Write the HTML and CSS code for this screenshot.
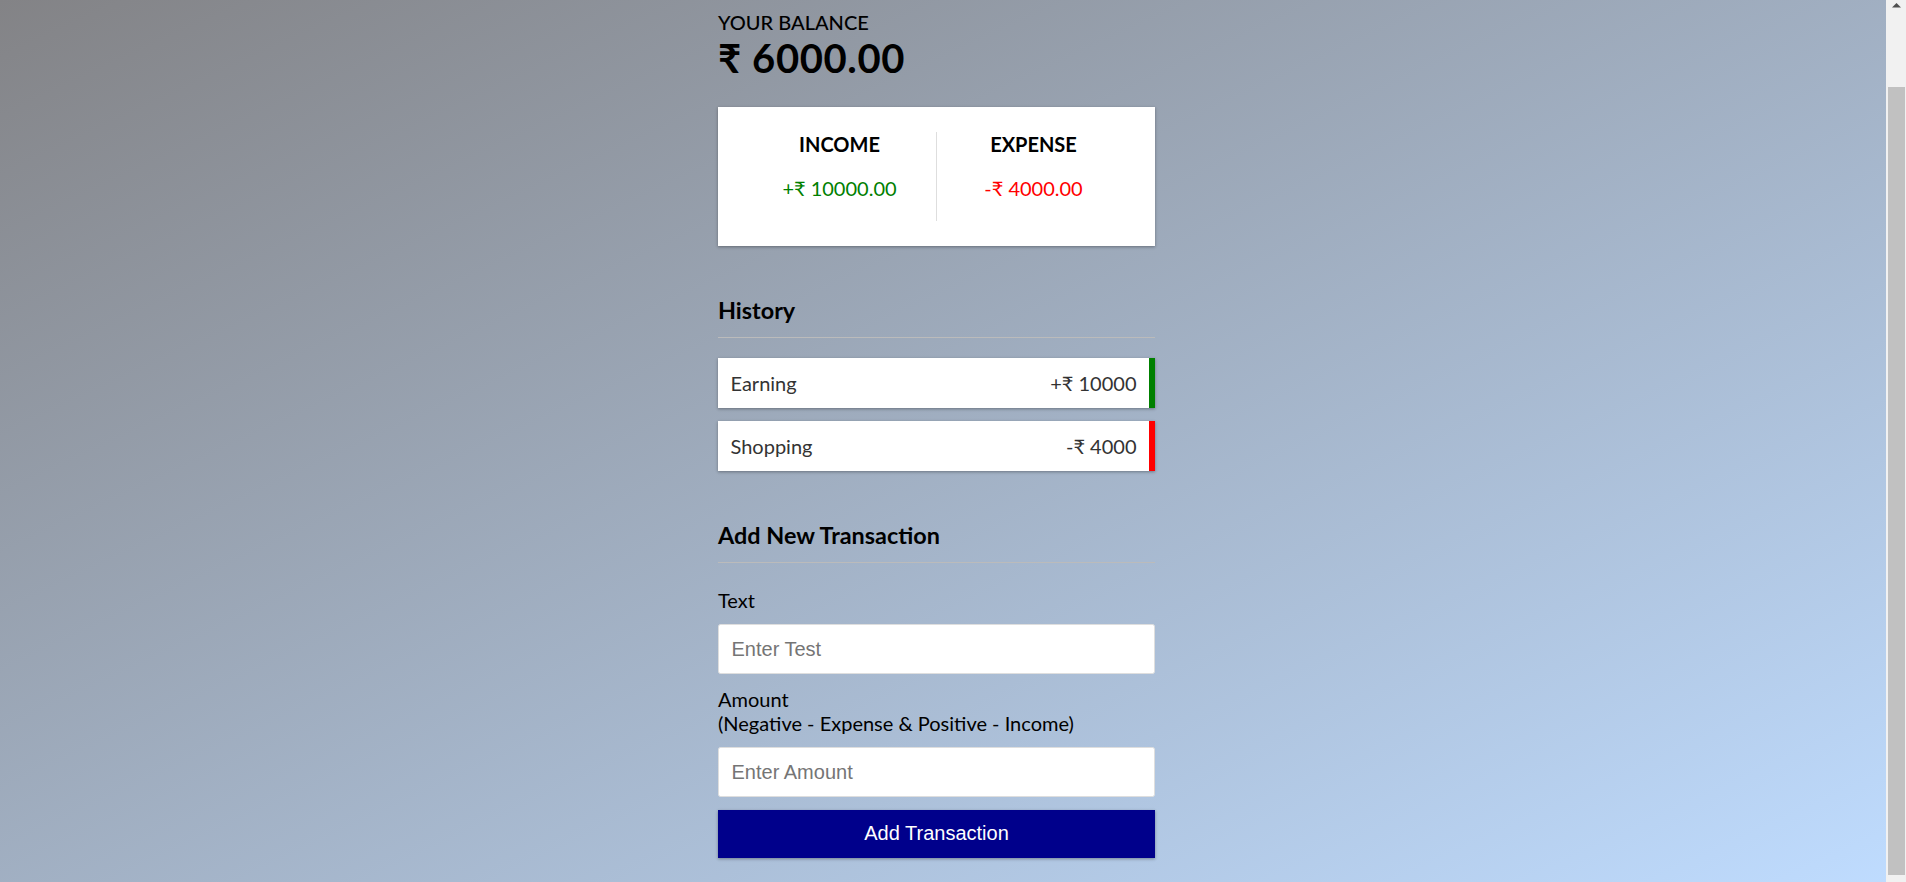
FILE: index.html
```html
<!DOCTYPE html>
<html lang="en">
<head>
<meta charset="UTF-8">
<title>Expense Tracker</title>
<link rel="stylesheet" href="styles.css">
</head>
<body>
<div class="container">
  <h4 class="balance-label">Your Balance</h4>
  <h1 class="balance">₹ 6000.00</h1>

  <div class="inc-exp">
    <div class="inc-exp__col inc-exp__col--first">
      <h4 class="inc-exp__title">Income</h4>
      <p class="money money--plus">+₹ 10000.00</p>
    </div>
    <div class="inc-exp__col">
      <h4 class="inc-exp__title">Expense</h4>
      <p class="money money--minus">-₹ 4000.00</p>
    </div>
  </div>

  <h3 class="section-title">History</h3>
  <ul class="list">
    <li class="list__item list__item--plus"><span>Earning</span><span>+₹ 10000</span></li>
    <li class="list__item list__item--minus"><span>Shopping</span><span>-₹ 4000</span></li>
  </ul>

  <h3 class="section-title">Add New Transaction</h3>
  <form class="form">
    <div class="form-control">
      <label class="form-label" for="text">Text</label>
      <input class="form-input" type="text" id="text" placeholder="Enter Test">
    </div>
    <div class="form-control">
      <label class="form-label" for="amount">Amount<br>(Negative - Expense &amp; Positive - Income)</label>
      <input class="form-input" type="number" id="amount" placeholder="Enter Amount">
    </div>
    <button class="btn" type="button">Add Transaction</button>
  </form>
</div>

<div class="scrollbar" aria-hidden="true">
  <div class="scrollbar__button">
    <svg width="20" height="17" viewBox="0 0 20 17"><polygon points="6,7.5 15,7.5 10.5,3" fill="#505050"/></svg>
  </div>
  <div class="scrollbar__thumb"></div>
</div>
</body>
</html>
```

FILE: styles.css
```css
* {
  box-sizing: border-box;
}

html {
  height: 100%;
  overflow: hidden;
}

body {
  margin: 0;
  padding-right: 33px;
  height: 100%;
  display: flex;
  justify-content: center;
  font-family: Lato, "Noto Sans", sans-serif;
  color: #000;
  background: linear-gradient(to bottom right, #838386, #bfdcff);
}

.container {
  width: 437px;
  padding-top: 10px;
}

.balance-label {
  margin: 0;
  font-size: 20px;
  line-height: 24px;
  font-weight: 500;
  text-transform: uppercase;
}

.balance {
  margin: 0;
  font-size: 40px;
  line-height: 48px;
  font-weight: 700;
  letter-spacing: 0.6px;
}

.inc-exp {
  display: flex;
  margin: 25px 0 50px;
  padding: 25px;
  background: #fff;
  box-shadow: 0 1px 4px rgba(0, 0, 0, 0.12), 0 1px 2.5px rgba(0, 0, 0, 0.24);
}

.inc-exp__col {
  flex: 1;
  text-align: center;
}

.inc-exp__col--first {
  border-right: 1px solid #dedede;
}

.inc-exp__title {
  margin: 0;
  font-size: 20px;
  line-height: 24px;
  font-weight: 700;
  text-transform: uppercase;
}

.money {
  margin: 20px 0 21px;
  font-size: 20px;
  line-height: 24px;
}

.money--plus {
  color: #008000;
}

.money--minus {
  color: #ff0000;
}

.section-title {
  margin: 0 0 12.5px;
  font-size: 23.4px;
  line-height: 28px;
  font-weight: 700;
  padding-bottom: 12.5px;
  border-bottom: 1px solid #bbb;
}

.list {
  list-style: none;
  margin: 20.5px 0 50px;
  padding: 0;
  display: flex;
  flex-direction: column;
  gap: 13px;
}

.list__item {
  display: flex;
  justify-content: space-between;
  align-items: center;
  height: 50px;
  padding: 0 12.5px;
  background: #fff;
  color: #333;
  font-size: 20px;
  line-height: 25px;
  box-shadow: 0 1px 4px rgba(0, 0, 0, 0.12), 0 1px 2.5px rgba(0, 0, 0, 0.24);
}

.list__item--plus {
  border-right: 6px solid #008000;
}

.list__item--minus {
  border-right: 6px solid #ff0000;
}

.form {
  margin: 0;
}

.form-control {
  display: flex;
  flex-direction: column;
}

.form-label {
  margin: 12.5px 0;
  font-size: 20px;
  line-height: 24px;
}

.form-input {
  display: block;
  width: 100%;
  height: 50px;
  padding: 0 12.5px;
  border: 1px solid #dedede;
  border-radius: 2.5px;
  background: #fff;
  font-family: "Liberation Sans", Arial, sans-serif;
  font-size: 20px;
  color: #000;
  outline: none;
}

.form-input::placeholder {
  color: #757575;
}

.btn {
  display: block;
  width: 100%;
  height: 48px;
  margin: 12.5px 0 0;
  padding: 0;
  border: 0;
  background: #00008b;
  color: #fff;
  font-family: "Liberation Sans", Arial, sans-serif;
  font-size: 20px;
  cursor: pointer;
  box-shadow: 0 1px 4px rgba(0, 0, 0, 0.12), 0 1px 2.5px rgba(0, 0, 0, 0.24);
}

.scrollbar {
  position: fixed;
  top: 0;
  right: 0;
  bottom: 0;
  width: 20px;
  background: #f1f1f1;
  display: flex;
  flex-direction: column;
}

.scrollbar__button {
  height: 17px;
  flex: none;
}

.scrollbar__button svg {
  display: block;
}

.scrollbar__thumb {
  height: 788px;
  margin: 70px 1px 0 2px;
  background: #c1c1c1;
}
```
